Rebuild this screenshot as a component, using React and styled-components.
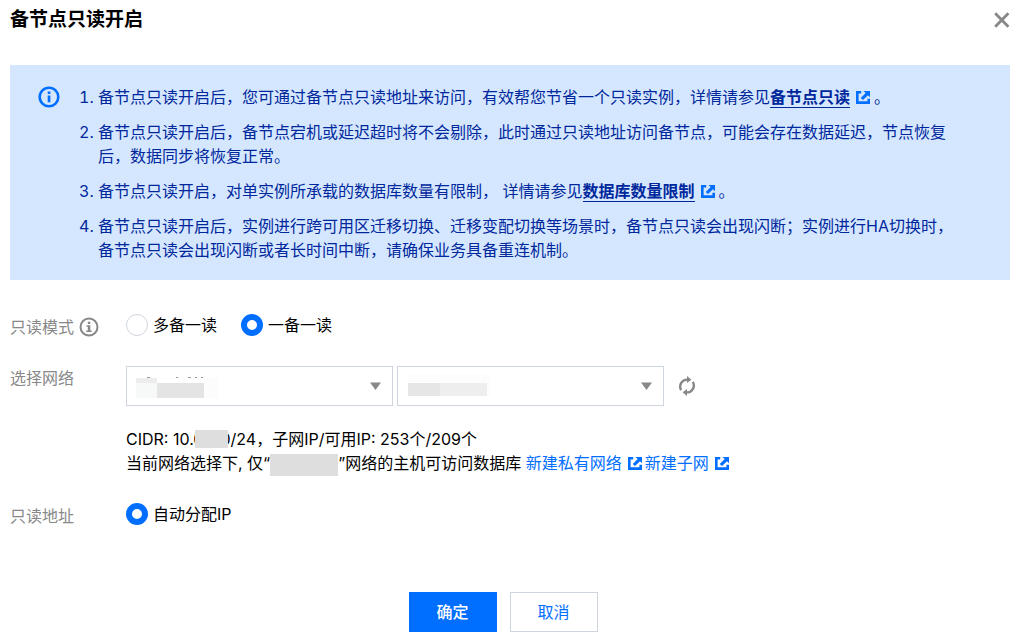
import React from "react";
import styled, { createGlobalStyle } from "styled-components";

const GlobalStyle = createGlobalStyle`
  *, *::before, *::after { box-sizing: border-box; }
  body {
    margin: 0;
    background: #fff;
    color: #000;
    font-family: Inter, "Noto Sans CJK SC", sans-serif;
    font-size: 16px;
    line-height: 24px;
  }
`;

const Dialog = styled.main`
  padding: 6px 14px 12px 10px;
`;

const Header = styled.header`
  display: flex;
  align-items: center;
  justify-content: space-between;
  height: 28px;
  margin-bottom: 31px;
`;

const Title = styled.h1`
  margin: 0;
  font-size: 19px;
  line-height: 26px;
  font-weight: 700;
`;

const IconButton = styled.button`
  display: flex;
  padding: 0;
  border: 0;
  background: none;
  color: #888;
  cursor: pointer;
`;

const Notice = styled.section`
  display: flex;
  padding: 20px 50px 18px 28px;
  background: #d5e7ff;
  color: #00289c;
`;

const NoticeIcon = styled.span`
  display: flex;
  flex: none;
  align-items: center;
  height: 24px;
  color: #006eff;
`;

const NoticeList = styled.ol`
  display: flex;
  flex-direction: column;
  gap: 11px;
  margin: 0;
  padding: 0 0 0 38px;
`;

const NoticeLink = styled.a`
  color: inherit;
  font-weight: 700;
  text-decoration: none;
  border-bottom: 1px solid currentColor;
`;

const TextLink = styled.a`
  color: #006eff;
  text-decoration: none;
`;

const LinkGlyph = styled.svg`
  margin: 0 ${(p) => p.$after || 0}px 0 6px;
  color: #006eff;
  vertical-align: -1px;
`;

const Form = styled.form`
  display: flex;
  flex-direction: column;
  padding-top: 33px;
`;

const Row = styled.div`
  display: flex;
  margin-bottom: ${(p) => p.$gap}px;
`;

const RowLabel = styled.div`
  display: flex;
  flex: none;
  align-items: center;
  gap: 5px;
  width: 116px;
  height: 28px;
  color: #888;
`;

const RadioGroup = styled.div`
  display: flex;
  align-items: center;
  gap: 24px;
  height: 24px;
`;

const RadioLabel = styled.label`
  display: flex;
  align-items: center;
  gap: 5px;
`;

const Radio = styled.input.attrs({ type: "radio" })`
  appearance: none;
  width: 22px;
  height: 22px;
  margin: 0;
  border: 1px solid #cfd5de;
  border-radius: 50%;
  background: #fff;
  &:checked {
    border: 6px solid #006eff;
  }
`;

const Fields = styled.div`
  min-width: 0;
`;

const SelectRow = styled.div`
  display: flex;
  align-items: center;
  gap: 4px;
  padding-top: 2px;
  margin-bottom: 21px;
`;

const SelectBox = styled.div`
  position: relative;
  width: 267px;
`;

const Select = styled.select`
  display: block;
  appearance: none;
  width: 100%;
  height: 40px;
  padding: 0 36px 0 10px;
  border: 1px solid #cfd5de;
  border-radius: 0;
  background: #fff;
  font: inherit;
`;

const Caret = styled.svg`
  position: absolute;
  top: 16px;
  right: 12px;
  color: #888;
  pointer-events: none;
`;

const SelectMosaic = styled.svg`
  position: absolute;
  top: 8px;
  left: 10px;
  pointer-events: none;
`;

const RefreshWrap = styled.div`
  padding-left: 10px;
`;

const Hint = styled.p`
  margin: 0;
`;

const Mosaic = styled.span`
  display: inline-block;
  position: relative;
  width: ${(p) => p.$width}px;
  height: ${(p) => p.$height}px;
  margin: 0 ${(p) => p.$overlap}px;
  background: #dedede;
  vertical-align: ${(p) => p.$drop}px;
`;

const Footer = styled.footer`
  display: flex;
  justify-content: center;
  gap: 13px;
  padding-right: 14px;
`;

const Button = styled.button`
  width: 88px;
  height: 40px;
  padding: 0;
  border: 1px solid ${(p) => (p.$primary ? "#006eff" : "#cfd5de")};
  background: ${(p) => (p.$primary ? "#006eff" : "#fff")};
  color: ${(p) => (p.$primary ? "#fff" : "#006eff")};
  font: inherit;
  font-weight: ${(p) => (p.$primary ? 500 : 400)};
  cursor: pointer;
`;

const InfoIcon = () => (
  <svg width="22" height="22" viewBox="0 0 22 22" fill="none" aria-hidden="true">
    <circle cx="11" cy="11" r="9.3" stroke="currentColor" strokeWidth="2.6" />
    <path d="M9.7 9.4h2.7v6.9H9.7zM9.7 5.6h2.7v2.4H9.7z" fill="currentColor" />
  </svg>
);

const HelpIcon = () => (
  <svg width="20" height="20" viewBox="0 0 20 20" fill="none" aria-hidden="true">
    <circle cx="10" cy="10" r="8.5" stroke="currentColor" strokeWidth="2" />
    <path
      d="M8.800 4.800h2.500v2.200H8.800zM7.500 8.200h3.800v5.200h1.400v1.500H7.300v-1.500h1.500V9.700H7.500z"
      fill="currentColor"
    />
  </svg>
);

const ExternalIcon = ({ after }) => (
  <LinkGlyph $after={after} width="14" height="13" viewBox="0 0 14 13" aria-hidden="true">
    <path
      d="M0 0h5.200v2.400H2.600v7.800h8.800V7.800H14V13H0zM7.400 0H14v6.200l-2-1.900-5 4.800-2.300-2.200 5-4.800z"
      fill="currentColor"
    />
  </LinkGlyph>
);

const CloseIcon = () => (
  <svg width="16" height="16" viewBox="0 0 16 16" aria-hidden="true">
    <path d="M1.2 1.200l13.200 13.600M14.400 1.200L1.200 14.800" stroke="currentColor" strokeWidth="2.800" />
  </svg>
);

const RefreshIcon = () => (
  <svg width="18" height="20" viewBox="0 0 18 20" fill="none" aria-hidden="true">
    <path
      d="M3.200 14.200A7 7 0 0 1 9.600 3.600M14.800 5.800a7 7 0 0 1-6.400 10.600"
      stroke="currentColor"
      strokeWidth="2.400"
    />
    <path d="M9 0l4.400 3.800L9 7zM9 20l-4.400-3.800L9 13z" fill="currentColor" />
  </svg>
);

const CaretIcon = () => (
  <Caret width="11" height="8" viewBox="0 0 11 8" aria-hidden="true">
    <path d="M0 .5h11L5.500 8z" fill="currentColor" />
  </Caret>
);

export default function App() {
  return (
    <>
      <GlobalStyle />
      <Dialog>
        <Header>
          <Title>备节点只读开启</Title>
          <IconButton type="button" aria-label="关闭">
            <CloseIcon />
          </IconButton>
        </Header>

        <Notice>
          <NoticeIcon>
            <InfoIcon />
          </NoticeIcon>
          <NoticeList>
            <li>
              备节点只读开启后，您可通过备节点只读地址来访问，有效帮您节省一个只读实例，详情请参见<NoticeLink href="#readonly">备节点只读</NoticeLink>
              <ExternalIcon after={4} />。
            </li>
            <li>备节点只读开启后，备节点宕机或延迟超时将不会剔除，此时通过只读地址访问备节点，可能会存在数据延迟，节点恢复后，数据同步将恢复正常。</li>
            <li>
              备节点只读开启，对单实例所承载的数据库数量有限制， 详情请参见<NoticeLink href="#limits">数据库数量限制</NoticeLink>
              <ExternalIcon after={4} />。
            </li>
            <li>备节点只读开启后，实例进行跨可用区迁移切换、迁移变配切换等场景时，备节点只读会出现闪断；实例进行HA切换时，备节点只读会出现闪断或者长时间中断，请确保业务具备重连机制。</li>
          </NoticeList>
        </Notice>

        <Form>
          <Row $gap={23}>
            <RowLabel>
              只读模式
              <HelpIcon />
            </RowLabel>
            <RadioGroup role="radiogroup" aria-label="只读模式">
              <RadioLabel>
                <Radio name="mode" value="multi" />
                多备一读
              </RadioLabel>
              <RadioLabel>
                <Radio name="mode" value="single" defaultChecked />
                一备一读
              </RadioLabel>
            </RadioGroup>
          </Row>

          <Row $gap={26}>
            <RowLabel as="label" htmlFor="vpc">选择网络</RowLabel>
            <Fields>
              <SelectRow>
                <SelectBox>
                  <Select id="vpc">
                    <option aria-label="私有网络" />
                  </Select>
                  <SelectMosaic width="82" height="24" viewBox="0 0 82 24" aria-hidden="true">
                    <path d="M11 3.500h3M40 3.500h2M52 3.500h3M59 3.500h2M65 3.500h2" stroke="#999" />
                    <path d="M0 4h21v5H0z" fill="#ededed" />
                    <path d="M0 9h21v15H0z" fill="#f7f9f8" />
                    <path d="M21 9h47v15H21z" fill="#e4e4e4" />
                    <path d="M68 4h14v20H68z" fill="#fcfcfc" />
                  </SelectMosaic>
                  <CaretIcon />
                </SelectBox>
                <SelectBox>
                  <Select aria-label="子网">
                    <option aria-label="子网" />
                  </Select>
                  <SelectMosaic width="84" height="24" viewBox="0 0 84 24" aria-hidden="true">
                    <path d="M1 0h83v22H1z" fill="#fdfdfd" />
                    <path d="M1 9h32v13H1z" fill="#e6e6e6" />
                    <path d="M33 9h47v13H33z" fill="#eee" />
                  </SelectMosaic>
                  <CaretIcon />
                </SelectBox>
                <RefreshWrap>
                  <IconButton type="button" aria-label="刷新">
                    <RefreshIcon />
                  </IconButton>
                </RefreshWrap>
              </SelectRow>
              <Hint>
                CIDR: 10.0<Mosaic $width={33} $height={18} $overlap={-8} $drop={-3} />0/24，子网IP/可用IP: 253个/209个
              </Hint>
              <Hint>
                当前网络选择下, 仅“<Mosaic $width={68} $height={22} $overlap={0} $drop={-7} />”网络的主机可访问数据库{" "}
                <TextLink href="#new-vpc">
                  新建私有网络
                  <ExternalIcon after={3} />
                </TextLink>
                <TextLink href="#new-subnet">
                  新建子网
                  <ExternalIcon />
                </TextLink>
              </Hint>
            </Fields>
          </Row>

          <Row $gap={62}>
            <RowLabel>只读地址</RowLabel>
            <RadioGroup role="radiogroup" aria-label="只读地址">
              <RadioLabel>
                <Radio name="address" value="auto" defaultChecked />
                自动分配IP
              </RadioLabel>
            </RadioGroup>
          </Row>

          <Footer>
            <Button type="submit" $primary>确定</Button>
            <Button type="button">取消</Button>
          </Footer>
        </Form>
      </Dialog>
    </>
  );
}
